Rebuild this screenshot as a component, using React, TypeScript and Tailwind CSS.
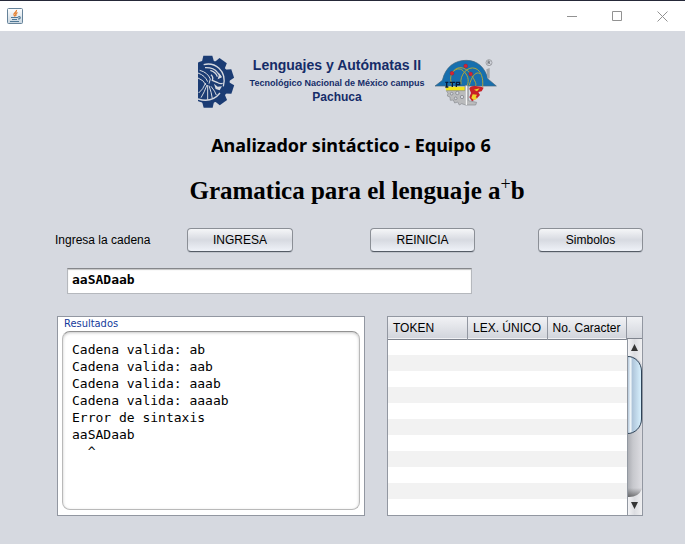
import { useState } from "react";

const teeth = [0, 36, 72, 108, 144, 180];

function JavaIcon() {
  return (
    <svg className="h-4 w-4" viewBox="0 0 16 16" aria-hidden="true">
      <defs>
        <linearGradient id="cupTile" x1="0" y1="0" x2="0" y2="1">
          <stop offset="0" stopColor="#ffffff" />
          <stop offset="1" stopColor="#c9d6e0" />
        </linearGradient>
      </defs>
      <rect x=".5" y=".5" width="15" height="15" rx="1" fill="url(#cupTile)" stroke="#66839a" />
      <path d="M9.500 2C10 4 6 5 7 7L8 8.500M10.500 4.500C8 5.500 8.500 6.500 9 8" fill="none" stroke="#e67e2b" strokeWidth="1.300" />
      <path d="M4 9.500h7M5 11.500h5M3 13.500h9M11 9c3-1.500 3 2 0 2" fill="none" stroke="#4f7896" strokeWidth="1.100" />
    </svg>
  );
}

function GearLogo() {
  return (
    <svg className="h-[54px] w-[38px] shrink-0" viewBox="52 46 114 162" role="img" aria-label="Tecnológico Nacional de México">
      <defs>
        <clipPath id="gearCut"><rect x="55" y="40" width="120" height="180" /></clipPath>
      </defs>
      <g clipPath="url(#gearCut)">
        <g fill="#1b3c74">
          {teeth.map((a) => (
            <path key={a} d="M66 70 71 48H98L104 70Z" transform={`rotate(${a} 85 126)`} />
          ))}
          <circle cx="85" cy="126" r="65" />
        </g>
        <g fill="none" stroke="#d6d9e0">
          <path d="M72 75Q98 68 118 86Q140 107 131 140" strokeWidth="4" />
          <path d="M76 84Q102 83 113 98L124 112M92 92Q110 98 113 111" strokeWidth="4" />
          <path d="M94 105Q102 112 98 122L112 128Q120 134 129 131" strokeWidth="4" />
          <path d="M119 101l8 12-13 6zM103 132l11 9 13-1-7 12-12-4z" fill="#d6d9e0" stroke="none" />
          <path d="M60 92Q84 98 92 118L88 132M55 100Q77 108 84 126M55 115Q72 121 79 136" strokeWidth="3" />
          <path d="M78 130Q70 150 57 160M82 136Q74 158 64 174M84 136V180M88 138Q96 160 98 177M94 140Q107 156 110 166" strokeWidth="3" />
          <path d="M55 178Q96 191 121 160" strokeWidth="4" />
        </g>
      </g>
    </svg>
  );
}

function AtomLogo() {
  return (
    <svg className="mt-[3px] h-[50px] w-[62px] shrink-0" viewBox="283 53 186 150" role="img" aria-label="ITP">
      <path d="M283 137 305 120C315 78 343 60 377 60S433 82 442 116L467 137Z" fill="#176fae" stroke="#48667c" strokeWidth="2" />
      <path d="M437 87l10-4v31h-7z" fill="#a4a6aa" />
      <circle cx="445" cy="67" r="9" fill="none" stroke="#85878b" strokeWidth="2" />
      <path d="M442 72V62h4q4 3 0 5h-4m3 0 4 5" fill="none" stroke="#55575c" strokeWidth="2" />
      <g fill="none" stroke="#b2a638" strokeWidth="3">
        <path d="M335 134C318 105 346 73 367 91S383 127 379 139M333 99C352 70 379 82 394 107S407 132 402 142M361 132C356 101 383 77 403 84S428 116 426 139M386 135C393 105 409 91 418 101" />
      </g>
      <g fill="#d52432" stroke="#801f36">
        <circle cx="375" cy="77" r="6" /><circle cx="334" cy="99" r="6" /><circle cx="390" cy="101" r="6" />
      </g>
      <path d="M314 139h64v13h-61z" fill="#f1e51b" />
      <path d="M318 126v14m-4-14h9m-9 14h9m4-14h16m-8 0v14m12 0v-14h10v7h-10" fill="none" stroke="#071a39" strokeWidth="4" />
      <path d="M317 151h56v-15h10v45l25 5-3 8h-30l-12-4-7 4-5-9-9 3-4-9-9 1-1-10-8-3 2-8z" fill="#babbbd" stroke="#888b90" strokeWidth="2" />
      <g fill="#d6d9e0" stroke="#77797e" strokeWidth="2">
        <circle cx="333" cy="160" r="4" /><circle cx="350" cy="158" r="5" /><circle cx="345" cy="174" r="4" /><circle cx="364" cy="170" r="5" />
      </g>
      <path d="M377 136v58" stroke="#fff" strokeWidth="3" />
      <path d="M386 145Q388 136 404 137L421 139 429 142 423 153 413 155 418 164 409 174 394 183 386 171 391 158Z" fill="#c82128" />
      <path d="M400 148l17-4-8 9zM396 162l13 1-4 8 6 3-11 6-8-7z" fill="#efd72c" />
    </svg>
  );
}

function ScrollBar() {
  return (
    <svg className="block h-full w-full" viewBox="0 0 15 176" preserveAspectRatio="none" aria-hidden="true">
      <defs>
        <linearGradient id="track"><stop stopColor="#a8aab0" /><stop offset=".4" stopColor="#c7c8cd" /><stop offset="1" stopColor="#dddde2" /></linearGradient>
        <linearGradient id="endButton"><stop stopColor="#f7f7f9" /><stop offset=".5" stopColor="#dcdde1" /><stop offset="1" stopColor="#f0f0f2" /></linearGradient>
        <linearGradient id="thumb"><stop stopColor="#9bb5ce" /><stop offset=".25" stopColor="#f1f7fa" /><stop offset=".38" stopColor="#afc5da" /><stop offset="1" stopColor="#d9f2ff" /></linearGradient>
        <linearGradient id="trackShade" x1="0" y1="0" x2="0" y2="1"><stop stopColor="#333" stopOpacity="0" /><stop offset="1" stopColor="#333" stopOpacity=".65" /></linearGradient>
      </defs>
      <rect width="15" height="176" fill="url(#track)" />
      <path d="M0 149H15V159H0Z" fill="url(#trackShade)" />
      <path d="M0 0H15V25Q11 17 0 17Z" fill="url(#endButton)" />
      <path d="M0 158Q11 159 15 150V176H0Z" fill="url(#endButton)" />
      <path d="M0 17.500C8 17 14.500 24 14.500 32V80C14.500 88 8 95 0 94.500Z" fill="url(#thumb)" stroke="#2e4358" />
      <path d="M4 12 7.500 5 11 12ZM4 163H11L7.500 170Z" fill="#353535" />
      <path d="M.5 0V176" stroke="#9298a1" />
    </svg>
  );
}

const buttonClass =
  "h-6 rounded border border-[#8b8f96] border-b-[#555c66] bg-linear-to-b from-[#f5f6f8] via-[#d7dae1] to-[#eff2f8] text-center text-[12px] leading-4 shadow-[0_1px_0_#c0c4cb]";

const headClass =
  "border-r border-r-[#9297a1] p-0 pl-[5px] text-left font-normal whitespace-nowrap";

const output = `Cadena valida: ab
Cadena valida: aab
Cadena valida: aaab
Cadena valida: aaaab
Error de sintaxis
aaSADaab
  ^`;

export default function App() {
  const [text, setText] = useState("aaSADaab");
  return (
    <div className="flex min-h-screen flex-col bg-[#d6d9e0] font-['Liberation_Sans',sans-serif] text-black">
      <header className="flex h-[31px] items-center border-t border-[#252838] bg-white pl-[7px]">
        <JavaIcon />
        <div className="ml-auto flex text-[#929292]">
          <button aria-label="Minimizar" className="flex h-[30px] w-[46px] items-center justify-center">
            <svg className="h-[11px] w-[11px]" viewBox="0 0 11 11"><path d="M0 5.500H10" stroke="currentColor" /></svg>
          </button>
          <button aria-label="Maximizar" className="flex h-[30px] w-[45px] items-center justify-center">
            <svg className="h-[11px] w-[11px]" viewBox="0 0 11 11"><path d="M.5.5h9v9h-9z" fill="none" stroke="currentColor" /></svg>
          </button>
          <button aria-label="Cerrar" className="flex h-[30px] w-[45px] items-center justify-center">
            <svg className="h-[11px] w-[11px]" viewBox="0 0 11 11"><path d="M.5.5l10 10m0-10-10 10" stroke="currentColor" /></svg>
          </button>
        </div>
      </header>

      <main className="flex flex-col pt-6 pr-[42px] pl-[55px]">
        <div className="flex items-start justify-center pr-1">
          <GearLogo />
          <div className="mx-1 w-[192px] pl-1 text-center font-bold whitespace-nowrap text-[#152c68]">
            <p className="text-[14px] leading-5">Lenguajes y Autómatas II</p>
            <p className="text-[9px] leading-4">Tecnológico Nacional de México campus</p>
            <p className="text-[12px] leading-3">Pachuca</p>
          </div>
          <AtomLogo />
        </div>

        <h1 className="mt-6 pl-1 text-center font-['Noto_Sans',sans-serif] text-[18px] leading-6 font-bold">
          Analizador sintáctico - Equipo 6
        </h1>
        <h2 className="mt-5 pl-4 text-center font-['Liberation_Serif',serif] text-[25px] leading-7 font-bold">
          Gramatica para el lenguaje a<sup className="text-[18px] leading-none font-normal">+</sup>b
        </h2>

        <div className="mt-[23px] flex items-center text-[12px]">
          <label htmlFor="cadena" className="w-[132px]">Ingresa la cadena</label>
          <button className={`${buttonClass} w-[106px]`}>INGRESA</button>
          <button className={`${buttonClass} ml-[77px] w-[105px]`}>REINICIA</button>
          <button className={`${buttonClass} ml-auto w-[105px]`}>Simbolos</button>
        </div>

        <input
          id="cadena"
          value={text}
          onChange={(e) => setText(e.target.value)}
          className="mt-4 ml-3 h-[26px] w-[405px] border border-[#b5b8bd] border-t-[#85878b] bg-white px-1 pb-1 font-['DejaVu_Sans_Mono',monospace] text-[13px] font-bold shadow-[inset_0_1px_1px_#c4c4c4] outline-none"
        />

        <div className="mt-[22px] ml-[2px] grid grid-cols-[308fr_256fr] gap-[22px]">
          <section className="flex h-[200px] flex-col border border-[#9297a1] bg-white px-1 pb-[5px]">
            <h3 className="pl-[2px] font-['DejaVu_Sans_Condensed','DejaVu_Sans',sans-serif] text-[11px] leading-[14px] text-[#143a9b]">
              Resultados
            </h3>
            <pre className="flex-1 rounded-lg border border-[#b9b9b9] border-t-[#929292] px-[9px] pt-[9px] font-['DejaVu_Sans_Mono',monospace] text-[13px] leading-[17px] shadow-[inset_0_1px_3px_#c8c8c8]">
              {output}
            </pre>
          </section>

          <div className="grid h-[200px] grid-cols-[1fr_15px] grid-rows-[22px_1fr] border border-[#9297a1] bg-white">
            <table className="row-span-2 w-full table-fixed border-collapse text-[12px]">
              <thead>
                <tr className="h-[22px] border-b border-b-[#7f848e] bg-linear-to-b from-[#f1f2f5] to-[#d2d5dc]">
                  <th className={headClass}>TOKEN</th>
                  <th className={headClass}>LEX. ÚNICO</th>
                  <th className={headClass}>No. Caracter</th>
                </tr>
              </thead>
              <tbody>
                {Array.from({ length: 11 }, (_, i) => (
                  <tr key={i} className="h-4 odd:bg-white even:bg-[#f2f2f2]">
                    <td className="p-0" /><td className="p-0" /><td className="p-0" />
                  </tr>
                ))}
              </tbody>
            </table>
            <div className="border-b border-[#7f848e] bg-linear-to-b from-[#f1f2f5] to-[#d2d5dc]" />
            <ScrollBar />
          </div>
        </div>
      </main>
    </div>
  );
}
